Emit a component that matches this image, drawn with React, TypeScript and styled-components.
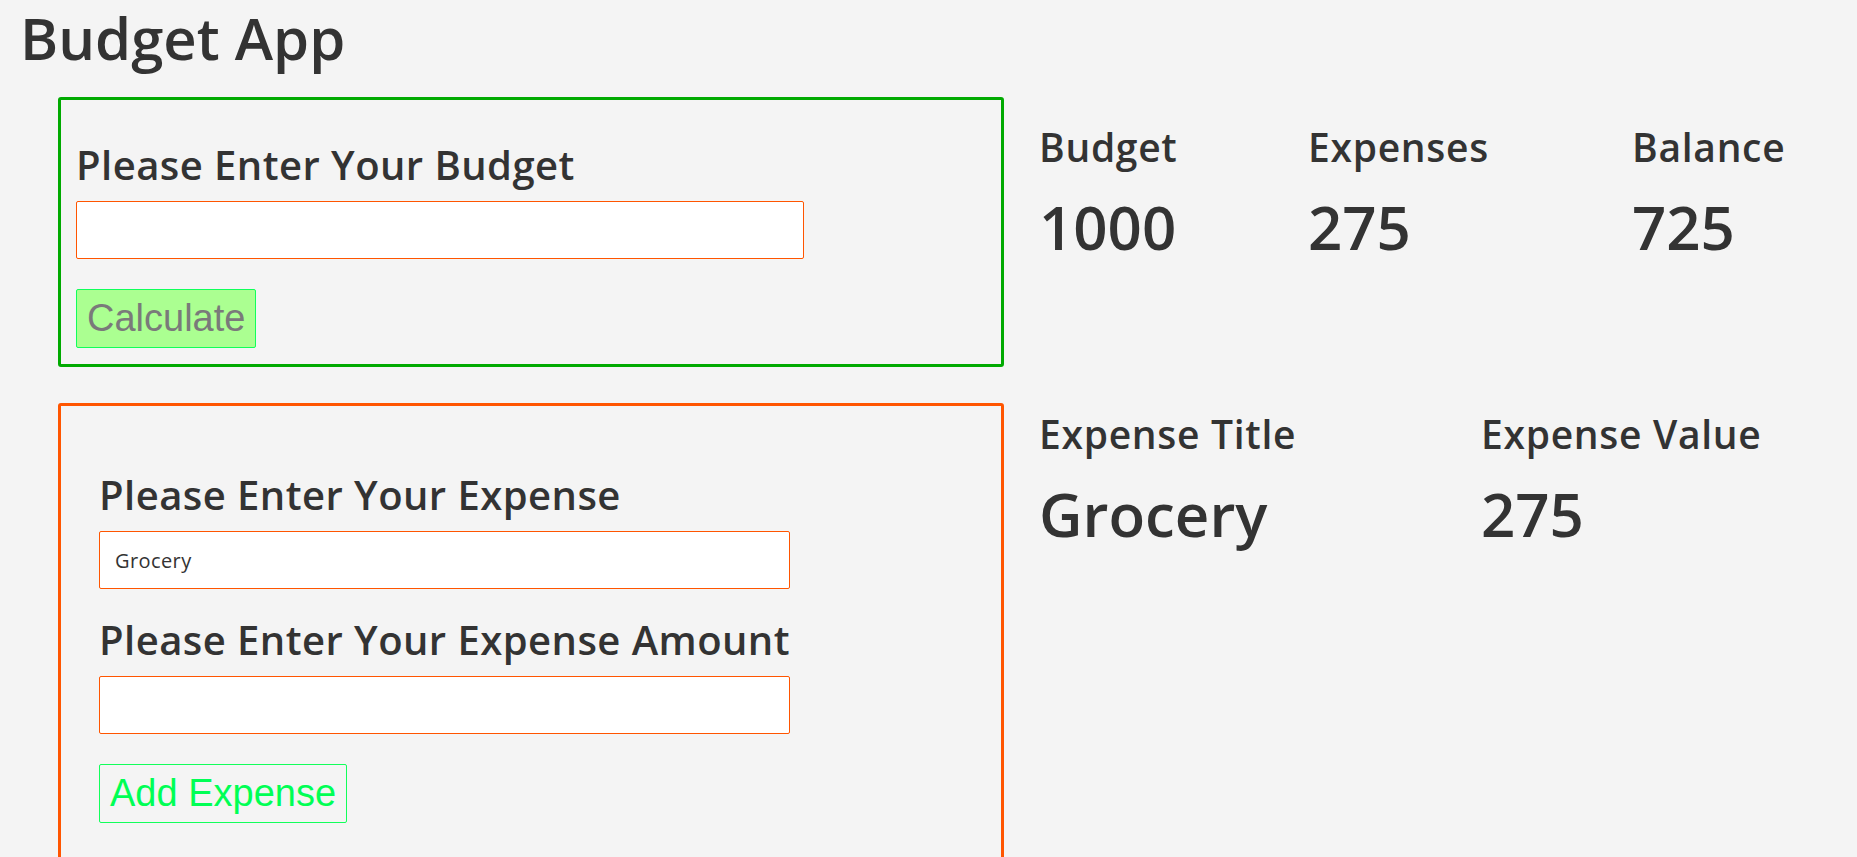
import React, { useState } from "react";
import styled, { createGlobalStyle } from "styled-components";

const GlobalStyle = createGlobalStyle`
  html, body {
    margin: 0;
    padding: 0;
    background: #f4f4f4;
    color: #333;
    font-family: "Open Sans", "Noto Sans", sans-serif;
  }
`;

const Page = styled.div`
  padding: 0 0 0 20px;
`;

const Title = styled.h1`
  margin: 1px 0 0;
  font-size: 58px;
  font-weight: 600;
  line-height: 74px;
`;

const Layout = styled.div`
  display: grid;
  grid-template-columns: 946px 1fr;
  column-gap: 35px;
  row-gap: 36px;
  align-items: start;
  margin: 22px 0 0 38px;
`;

const Card = styled.form<{ $tone: "green" | "orange"; $pad: number; $top: number }>`
  border: 3px solid ${(p) => (p.$tone === "green" ? "#00aa00" : "#ff5500")};
  border-radius: 3px;
  padding: ${(p) => `${p.$top}px ${p.$pad}px 16px`};
  display: flex;
  flex-direction: column;
  align-items: flex-start;
`;

const FieldLabel = styled.label<{ $gap?: number }>`
  display: block;
  font-size: 40px;
  font-weight: 600;
  line-height: 54px;
  letter-spacing: 0.45px;
  margin-top: ${(p) => p.$gap ?? 0}px;
`;

const TextInput = styled.input`
  box-sizing: border-box;
  width: 80%;
  height: 58px;
  margin-top: 9px;
  padding: 0 15px;
  border: 1px solid #ff5500;
  border-radius: 2px;
  background: #fff;
  color: #333;
  font-family: "Open Sans", "Noto Sans", sans-serif;
  font-size: 20px;
  letter-spacing: 0.4px;
  outline: none;
`;

const ActionButton = styled.button<{ $filled?: boolean }>`
  margin-top: 30px;
  height: 59px;
  padding: 0 10px;
  border: 1px solid #11ff5a;
  border-radius: 2px;
  background: ${(p) => (p.$filled ? "#abff91" : "transparent")};
  color: ${(p) => (p.$filled ? "#7a7a7a" : "#00ff55")};
  font-family: "Liberation Sans", Arial, sans-serif;
  font-size: 38px;
  cursor: pointer;
`;

const Spacer = styled.div`
  height: 120px;
`;

const InfoRow = styled.div<{ $cols: string; $top: number }>`
  display: grid;
  grid-template-columns: ${(p) => p.$cols};
  padding-top: ${(p) => p.$top}px;
`;

const InfoItem = styled.div`
  display: flex;
  flex-direction: column;
`;

const InfoLabel = styled.span`
  font-size: 39px;
  font-weight: 600;
  line-height: 53px;
  letter-spacing: 0.7px;
`;

const InfoValue = styled.span`
  margin-top: 15px;
  font-size: 60px;
  font-weight: 600;
  line-height: 79px;
`;

export default function App() {
  const [budget, setBudget] = useState("");
  const [title, setTitle] = useState("Grocery");
  const [amount, setAmount] = useState("");

  const total = 1000;
  const spent = 275;

  return (
    <Page>
      <GlobalStyle />
      <Title>Budget App</Title>
      <Layout>
        <Card $tone="green" $pad={15} $top={38} onSubmit={(e) => e.preventDefault()}>
          <FieldLabel htmlFor="budget">Please Enter Your Budget</FieldLabel>
          <TextInput id="budget" value={budget} onChange={(e) => setBudget(e.target.value)} />
          <ActionButton $filled type="submit">
            Calculate
          </ActionButton>
        </Card>

        <InfoRow $cols="269px 324px auto" $top={23}>
          <InfoItem>
            <InfoLabel>Budget</InfoLabel>
            <InfoValue>{total}</InfoValue>
          </InfoItem>
          <InfoItem>
            <InfoLabel>Expenses</InfoLabel>
            <InfoValue>{spent}</InfoValue>
          </InfoItem>
          <InfoItem>
            <InfoLabel>Balance</InfoLabel>
            <InfoValue>{total - spent}</InfoValue>
          </InfoItem>
        </InfoRow>

        <Card $tone="orange" $pad={38} $top={62} onSubmit={(e) => e.preventDefault()}>
          <FieldLabel htmlFor="expense">Please Enter Your Expense</FieldLabel>
          <TextInput id="expense" value={title} onChange={(e) => setTitle(e.target.value)} />
          <FieldLabel htmlFor="amount" $gap={24}>
            Please Enter Your Expense Amount
          </FieldLabel>
          <TextInput id="amount" value={amount} onChange={(e) => setAmount(e.target.value)} />
          <ActionButton type="submit">Add Expense</ActionButton>
          <Spacer />
        </Card>

        <InfoRow $cols="442px auto" $top={4}>
          <InfoItem>
            <InfoLabel>Expense Title</InfoLabel>
            <InfoValue>{title}</InfoValue>
          </InfoItem>
          <InfoItem>
            <InfoLabel>Expense Value</InfoLabel>
            <InfoValue>{spent}</InfoValue>
          </InfoItem>
        </InfoRow>
      </Layout>
    </Page>
  );
}
